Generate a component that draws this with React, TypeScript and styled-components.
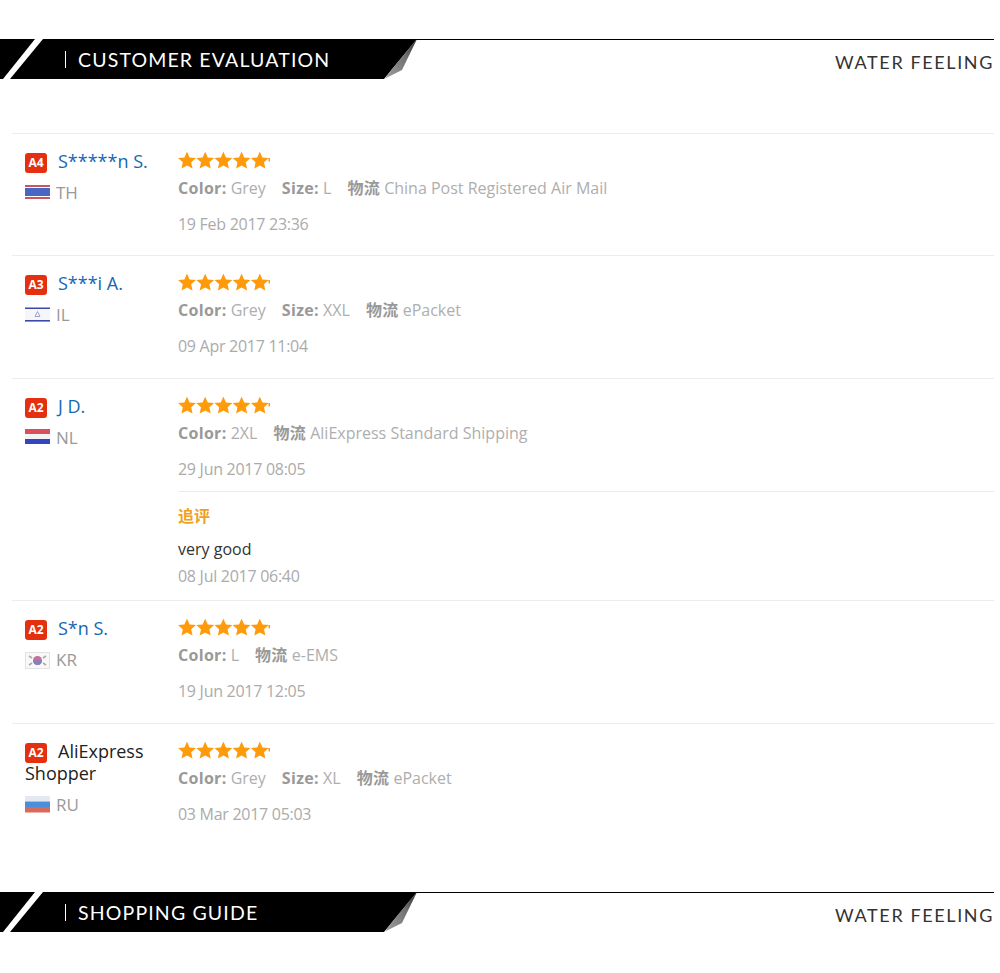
import React from 'react';
import styled, { createGlobalStyle } from 'styled-components';

const GlobalStyle = createGlobalStyle`
  html, body {
    margin: 0;
    padding: 0;
    background: #fff;
  }
`;

const Page = styled.div`
  width: 1000px;
  height: 973px;
  overflow: hidden;
  padding: 39px 6px 0 0;
  box-sizing: border-box;
  font-family: 'Open Sans', 'Noto Sans CJK SC', sans-serif;
  -webkit-font-smoothing: antialiased;
`;

const Banner = styled.div`
  position: relative;
  height: 40px;
  border-top: 1px solid #000;
  box-sizing: border-box;
  display: flex;
  justify-content: flex-end;
`;

const BannerShape = styled.svg`
  position: absolute;
  left: 0;
  top: -1px;
`;

const BannerTitle = styled.div`
  position: absolute;
  left: 65px;
  top: 11px;
  height: 17px;
  line-height: 17px;
  padding-left: 12px;
  border-left: 1px solid #fff;
  color: #fff;
  font-family: Lato, sans-serif;
  font-size: 19.5px;
  letter-spacing: 1.15px;
  white-space: nowrap;
`;

const Brand = styled.div`
  margin-top: 11px;
  font-family: Lato, sans-serif;
  font-size: 18px;
  line-height: 22px;
  letter-spacing: 1.62px;
  color: #333;
`;

const ReviewList = styled.div`
  margin: 53.9px 0 0 12px;
  height: 759.1px;
`;

const Row = styled.div<{ $tall?: boolean }>`
  display: flex;
  border-top: 1px solid #ececec;
  padding: 15px 0 0 13px;
  box-sizing: border-box;
  min-height: ${p => (p.$tall ? '222.2px' : '122.5px')};
`;

const UserColumn = styled.div`
  width: 153px;
  flex: none;
`;

const UserName = styled.div<{ $plain?: boolean }>`
  font-size: 18px;
  line-height: 22px;
  padding-top: 1px;
  color: ${p => (p.$plain ? '#222' : '#1467b5')};
`;

const Badge = styled.span`
  display: inline-block;
  width: 22px;
  height: 20px;
  margin: 3px 11px -1px 0;
  border-radius: 3px;
  background: #e4300f;
  color: #fff;
  font-size: 12px;
  font-weight: 700;
  line-height: 20px;
  text-align: center;
  vertical-align: top;
`;

const Country = styled.div`
  display: flex;
  align-items: center;
  gap: 6px;
  margin-top: 10px;
  font-size: 17px;
  line-height: 22px;
  color: #999;
`;

const Detail = styled.div`
  flex: 1;
  min-width: 0;
`;

const Stars = styled.svg`
  display: block;
  margin-top: 3px;
`;

const Attrs = styled.div`
  display: flex;
  gap: 16px;
  margin-top: 6px;
  font-size: 16px;
  line-height: 24px;
  color: #aeaeae;
  white-space: nowrap;
`;

const Attr = styled.span`
  b {
    font-weight: 700;
    letter-spacing: 0.3px;
    color: #999;
  }
`;

const DateText = styled.div<{ $tight?: boolean }>`
  margin-top: ${p => (p.$tight ? '3px' : '12px')};
  font-size: 16px;
  line-height: 24px;
  letter-spacing: -0.28px;
  color: #ababab;
`;

const FollowUp = styled.div`
  margin-top: 10px;
  padding-top: 12px;
  border-top: 1px solid #ececec;
`;

const FollowLabel = styled.div`
  font-size: 16px;
  line-height: 24px;
  font-weight: 700;
  color: #f0a020;
`;

const FollowText = styled.div`
  margin-top: 9px;
  font-size: 16px;
  line-height: 24px;
  color: #333;
`;

const starPoints = (x: number) => {
  const cx = x + 9;
  const cy = 9;
  const pts: string[] = [];
  for (let i = 0; i < 10; i++) {
    const r = i % 2 === 0 ? 9.4 : 4.4;
    const a = (Math.PI / 5) * i - Math.PI / 2;
    pts.push(`${(cx + r * Math.cos(a)).toFixed(2)},${(cy + r * Math.sin(a)).toFixed(2)}`);
  }
  return pts.join(' ');
};

const StarRow = () => (
  <Stars width="92" height="18" viewBox="0 0 92 18">
    {[0, 18.2, 36.4, 54.6, 72.8].map(x => (
      <polygon key={x} points={starPoints(x)} fill="#ff9a0a" />
    ))}
    <polygon points="90.4,6 92,6 92,9.5 90.6,9.5" fill="#ff9a0a" />
  </Stars>
);

const HeaderShape = () => (
  <BannerShape width="420" height="40" viewBox="0 0 420 40">
    <defs>
      <linearGradient id="fold" x1="0" y1="1" x2="1" y2="0">
        <stop offset="0" stopColor="#a0a0a0" />
        <stop offset="0.6" stopColor="#707070" />
        <stop offset="1" stopColor="#2a2a2a" />
      </linearGradient>
    </defs>
    <polygon points="0,0 417,0 384,40 0,40" fill="#000" />
    <polygon points="35,0 43,0 10,40 3,40" fill="#fff" />
    <polygon points="417,0 402,31 385,39.5 392,30" fill="url(#fold)" />
  </BannerShape>
);

const Flag = ({ code }: { code: string }) => {
  const inner: Record<string, React.ReactNode> = {
    TH: (
      <>
        <rect y="1" width="25" height="2" fill="#c9555f" />
        <rect y="4" width="25" height="8" fill="#4a66c4" />
        <rect y="13" width="25" height="2" fill="#c9555f" />
      </>
    ),
    IL: (
      <>
        <rect y="0.5" width="25" height="1.6" fill="#3a4aa8" />
        <rect y="2" width="25" height="11" fill="#f6f6f8" />
        <rect y="13" width="25" height="1.6" fill="#3a4aa8" />
        <polygon points="12.5,4.5 15,9.5 10,9.5" fill="none" stroke="#9aa3cf" />
      </>
    ),
    NL: (
      <>
        <rect y="0" width="25" height="5" fill="#d8505c" />
        <rect y="5" width="25" height="5" fill="#f4f4f6" />
        <rect y="10" width="25" height="5" fill="#3346c0" />
      </>
    ),
    KR: (
      <>
        <rect x="0.5" y="0.5" width="24" height="16" fill="#f8f8f8" stroke="#e2e2e2" />
        <circle cx="12.5" cy="8.5" r="4.5" fill="#c76f9a" />
        <path d="M8 8.5a4.5 4.5 0 0 0 9 0z" fill="#7c83c4" />
        <path d="M4 4l3 2M21 4l-3 2M4 13l3-2M21 13l-3-2" stroke="#aaa" strokeWidth="1.6" />
      </>
    ),
    RU: (
      <>
        <rect y="0" width="25" height="5.5" fill="#e4e8f0" />
        <rect y="5.5" width="25" height="5.5" fill="#4a8fdc" />
        <rect y="11" width="25" height="5.5" fill="#d86a5c" />
      </>
    ),
  };
  return (
    <svg width="25" height="17" viewBox="0 0 25 17">
      {inner[code]}
    </svg>
  );
};

type Review = {
  badge: string;
  name: string;
  plain?: boolean;
  country: string;
  attrs: [string, string][];
  date: string;
  follow?: { text: string; date: string };
};

const reviews: Review[] = [
  {
    badge: 'A4',
    name: 'S*****n S.',
    country: 'TH',
    attrs: [['Color:', 'Grey'], ['Size:', 'L'], ['物流', 'China Post Registered Air Mail']],
    date: '19 Feb 2017 23:36',
  },
  {
    badge: 'A3',
    name: 'S***i A.',
    country: 'IL',
    attrs: [['Color:', 'Grey'], ['Size:', 'XXL'], ['物流', 'ePacket']],
    date: '09 Apr 2017 11:04',
  },
  {
    badge: 'A2',
    name: 'J D.',
    country: 'NL',
    attrs: [['Color:', '2XL'], ['物流', 'AliExpress Standard Shipping']],
    date: '29 Jun 2017 08:05',
    follow: { text: 'very good', date: '08 Jul 2017 06:40' },
  },
  {
    badge: 'A2',
    name: 'S*n S.',
    country: 'KR',
    attrs: [['Color:', 'L'], ['物流', 'e-EMS']],
    date: '19 Jun 2017 12:05',
  },
  {
    badge: 'A2',
    name: 'AliExpress Shopper',
    plain: true,
    country: 'RU',
    attrs: [['Color:', 'Grey'], ['Size:', 'XL'], ['物流', 'ePacket']],
    date: '03 Mar 2017 05:03',
  },
];

const SectionHeader = ({ title }: { title: string }) => (
  <Banner>
    <HeaderShape />
    <BannerTitle>{title}</BannerTitle>
    <Brand>WATER FEELING</Brand>
  </Banner>
);

export default function App() {
  return (
    <Page>
      <GlobalStyle />
      <SectionHeader title="CUSTOMER EVALUATION" />
      <ReviewList>
        {reviews.map(r => (
          <Row key={r.date} $tall={!!r.follow}>
            <UserColumn>
              <UserName $plain={r.plain}>
                <Badge>{r.badge}</Badge>
                {r.name}
              </UserName>
              <Country>
                <Flag code={r.country} />
                {r.country}
              </Country>
            </UserColumn>
            <Detail>
              <StarRow />
              <Attrs>
                {r.attrs.map(([k, v]) => (
                  <Attr key={k}>
                    <b>{k}</b> {v}
                  </Attr>
                ))}
              </Attrs>
              <DateText>{r.date}</DateText>
              {r.follow && (
                <FollowUp>
                  <FollowLabel>追评</FollowLabel>
                  <FollowText>{r.follow.text}</FollowText>
                  <DateText $tight>{r.follow.date}</DateText>
                </FollowUp>
              )}
            </Detail>
          </Row>
        ))}
      </ReviewList>
      <SectionHeader title="SHOPPING GUIDE" />
    </Page>
  );
}
